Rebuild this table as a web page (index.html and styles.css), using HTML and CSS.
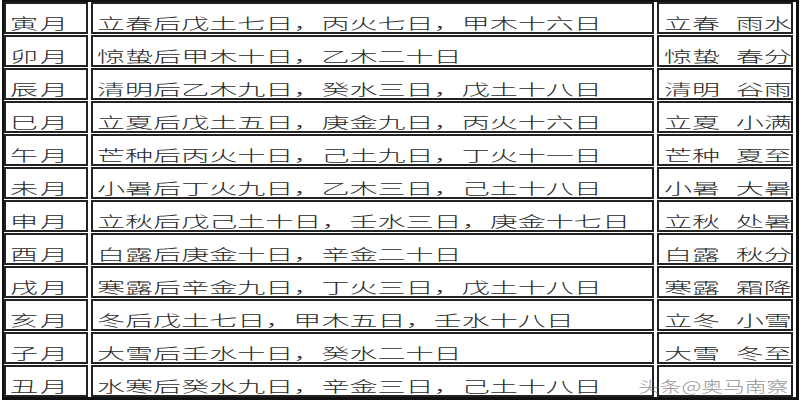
FILE: index.html
```html
<!DOCTYPE html>
<html lang="zh">
<head>
<meta charset="utf-8">
<link rel="stylesheet" href="styles.css">
</head>
<body>
<div class="table">
  <div class="cell c1"><span class="t">寅月</span></div><div class="cell c2"><span class="t">立春后戊土七日，丙火七日，甲木十六日</span></div><div class="cell c3"><span class="t">立春 雨水</span></div>
  <div class="cell c1"><span class="t">卯月</span></div><div class="cell c2"><span class="t">惊蛰后甲木十日，乙木二十日</span></div><div class="cell c3"><span class="t">惊蛰 春分</span></div>
  <div class="cell c1"><span class="t">辰月</span></div><div class="cell c2"><span class="t">清明后乙木九日，癸水三日，戊土十八日</span></div><div class="cell c3"><span class="t">清明 谷雨</span></div>
  <div class="cell c1"><span class="t">巳月</span></div><div class="cell c2"><span class="t">立夏后戊土五日，庚金九日，丙火十六日</span></div><div class="cell c3"><span class="t">立夏 小满</span></div>
  <div class="cell c1"><span class="t">午月</span></div><div class="cell c2"><span class="t">芒种后丙火十日，己土九日，丁火十一日</span></div><div class="cell c3"><span class="t">芒种 夏至</span></div>
  <div class="cell c1"><span class="t">未月</span></div><div class="cell c2"><span class="t">小暑后丁火九日，乙木三日，己土十八日</span></div><div class="cell c3"><span class="t">小暑 大暑</span></div>
  <div class="cell c1"><span class="t">申月</span></div><div class="cell c2"><span class="t">立秋后戊己土十日，壬水三日，庚金十七日</span></div><div class="cell c3"><span class="t">立秋 处暑</span></div>
  <div class="cell c1"><span class="t">酉月</span></div><div class="cell c2"><span class="t">白露后庚金十日，辛金二十日</span></div><div class="cell c3"><span class="t">白露 秋分</span></div>
  <div class="cell c1"><span class="t">戌月</span></div><div class="cell c2"><span class="t">寒露后辛金九日，丁火三日，戊土十八日</span></div><div class="cell c3"><span class="t">寒露 霜降</span></div>
  <div class="cell c1"><span class="t">亥月</span></div><div class="cell c2"><span class="t">冬后戊土七日，甲木五日，壬水十八日</span></div><div class="cell c3"><span class="t">立冬 小雪</span></div>
  <div class="cell c1"><span class="t">子月</span></div><div class="cell c2"><span class="t">大雪后壬水十日，癸水二十日</span></div><div class="cell c3"><span class="t">大雪 冬至</span></div>
  <div class="cell c1"><span class="t">丑月</span></div><div class="cell c2"><span class="t">水寒后癸水九日，辛金三日，己土十八日</span></div><div class="cell c3"></div>
  <div class="mark">头条@奥马南察</div>
</div>
</body>
</html>
```

FILE: styles.css
```css
html, body {
  margin: 0;
  padding: 0;
  background: #fff;
}

body {
  width: 800px;
  height: 400px;
  overflow: hidden;
}

.table {
  position: relative;
  box-sizing: border-box;
  width: 797px;
  height: 400px;
  margin-left: 2px;
  border: 2px solid #111;
  border-bottom-width: 3px;
  border-right-width: 3px;
  padding: 0 2px 0 0;
  display: grid;
  grid-template-columns: 84px 563px 136px;
  grid-auto-rows: 32px;
  column-gap: 3px;
  row-gap: 1px;
  font-family: "Noto Sans CJK SC", "Noto Sans", sans-serif;
  font-size: 15px;
  font-weight: 300;
  color: #2b2b2b;
}

.cell {
  box-sizing: border-box;
  border: 2px solid #222;
  display: flex;
  align-items: center;
  padding: 9px 0 0 4px;
  overflow: hidden;
}

.t {
  display: inline-block;
  white-space: nowrap;
  transform: scaleX(1.87);
  transform-origin: 0 50%;
  line-height: 1;
}

.c1 .t {
  letter-spacing: 1px;
}

.c3 .t {
  word-spacing: 5px;
}

.c3 {
  padding-left: 5px;
}

.mark {
  position: absolute;
  left: 634px;
  top: 376px;
  font-size: 15px;
  line-height: 1;
  color: rgba(110, 110, 110, 0.75);
  white-space: nowrap;
  transform: scaleX(1.45);
  transform-origin: 0 50%;
}
```
